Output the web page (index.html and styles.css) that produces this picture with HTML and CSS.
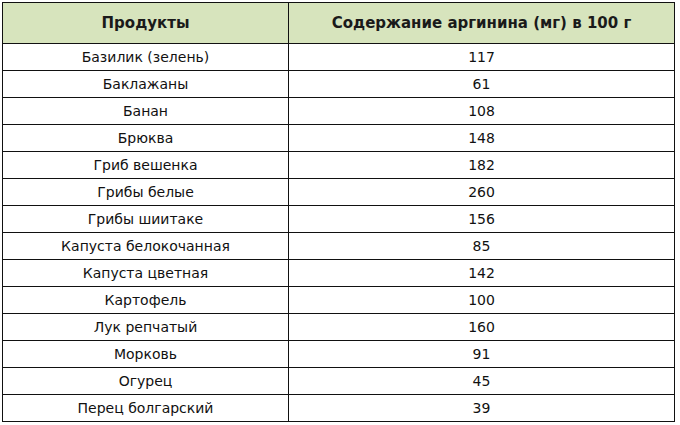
FILE: index.html
```html
<!DOCTYPE html>
<html lang="ru">
<head>
<meta charset="utf-8">
<link rel="stylesheet" href="styles.css">
</head>
<body>
<table class="tbl">
  <colgroup><col class="c1"><col class="c2"></colgroup>
  <thead>
    <tr><th>Продукты</th><th>Содержание аргинина (мг) в 100 г</th></tr>
  </thead>
  <tbody>
    <tr><td>Базилик (зелень)</td><td>117</td></tr>
    <tr><td>Баклажаны</td><td>61</td></tr>
    <tr><td>Банан</td><td>108</td></tr>
    <tr><td>Брюква</td><td>148</td></tr>
    <tr><td>Гриб вешенка</td><td>182</td></tr>
    <tr><td>Грибы белые</td><td>260</td></tr>
    <tr><td>Грибы шиитаке</td><td>156</td></tr>
    <tr><td>Капуста белокочанная</td><td>85</td></tr>
    <tr><td>Капуста цветная</td><td>142</td></tr>
    <tr><td>Картофель</td><td>100</td></tr>
    <tr><td>Лук репчатый</td><td>160</td></tr>
    <tr><td>Морковь</td><td>91</td></tr>
    <tr><td>Огурец</td><td>45</td></tr>
    <tr><td>Перец болгарский</td><td>39</td></tr>
  </tbody>
</table>
</body>
</html>
```
FILE: styles.css
```css
html, body {
  margin: 0;
  padding: 0;
  background: #ffffff;
}
body {
  padding: 2px 0 0 2px;
  font-family: "DejaVu Sans", Verdana, sans-serif;
  font-size: 14px;
  color: #111;
}
.tbl {
  border-collapse: collapse;
  width: 673px;
  table-layout: fixed;
}
.c1 { width: 286px; }
.tbl th, .tbl td {
  border: 1px solid #111;
  text-align: center;
  padding: 0;
}
.tbl th {
  height: 40px;
  background: #d7e4bd;
  font-weight: bold;
  font-size: 15px;
  color: #1a1a1a;
}
.tbl td {
  height: 26px;
}
```
